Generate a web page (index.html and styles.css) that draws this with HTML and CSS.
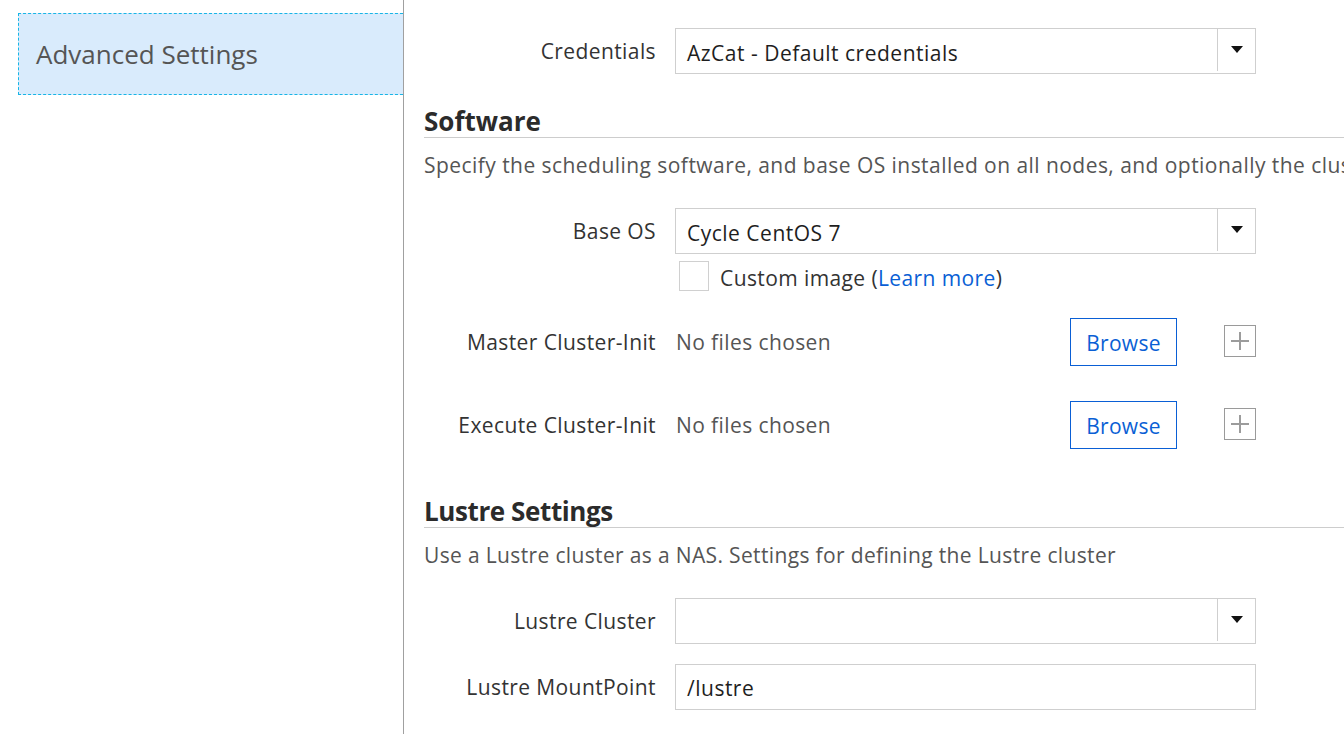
FILE: index.html
```html
<!DOCTYPE html>
<html>
<head>
<meta charset="utf-8">
<link rel="stylesheet" href="styles.css">
</head>
<body>
<div class="page">
  <aside class="sidebar">
    <div class="nav-item">Advanced Settings</div>
  </aside>
  <main class="main">
    <div class="row">
      <label class="lbl">Credentials</label>
      <div class="select"><span class="val">AzCat - Default credentials</span><span class="arrow"><i></i></span></div>
    </div>

    <h2 class="section">Software</h2>
    <p class="desc">Specify the scheduling software, and base OS installed on all nodes, and optionally the cluster-init specs to run at startup</p>

    <div class="row">
      <label class="lbl">Base OS</label>
      <div class="select"><span class="val">Cycle CentOS 7</span><span class="arrow"><i></i></span></div>
    </div>
    <div class="row check-row">
      <span></span>
      <div class="check"><span class="box"></span><span>Custom image (<a class="link">Learn more</a>)</span></div>
    </div>

    <div class="row file-row first">
      <label class="lbl">Master Cluster-Init</label>
      <div class="file">
        <span class="nofile">No files chosen</span>
        <button class="browse">Browse</button>
        <button class="plus"><i></i></button>
      </div>
    </div>
    <div class="row file-row">
      <label class="lbl">Execute Cluster-Init</label>
      <div class="file">
        <span class="nofile">No files chosen</span>
        <button class="browse">Browse</button>
        <button class="plus"><i></i></button>
      </div>
    </div>

    <h2 class="section lustre">Lustre Settings</h2>
    <p class="desc short">Use a Lustre cluster as a NAS. Settings for defining the Lustre cluster</p>

    <div class="row">
      <label class="lbl">Lustre Cluster</label>
      <div class="select"><span class="val"></span><span class="arrow"><i></i></span></div>
    </div>
    <div class="row mount">
      <label class="lbl">Lustre MountPoint</label>
      <div class="input">/lustre</div>
    </div>
  </main>
</div>
</body>
</html>
```

FILE: styles.css
```css
html, body {
  margin: 0;
  padding: 0;
  background: #fff;
  overflow: hidden;
}
body {
  font-family: "Open Sans", "Noto Sans", sans-serif;
  color: #333;
  width: 1344px;
  height: 734px;
}
.page {
  display: flex;
  height: 734px;
}
.sidebar {
  width: 404px;
  flex: none;
  border-right: 1px solid #a0a0a0;
  padding-top: 13px;
  box-sizing: border-box;
}
.nav-item {
  margin-left: 18px;
  height: 82px;
  box-sizing: border-box;
  background: #d9ebfc;
  border: 1px dashed #17b5e6;
  border-right: none;
  padding-left: 17px;
  display: flex;
  align-items: center;
  font-size: 26px;
  color: #555;
}
.main {
  flex: 1;
  padding-left: 20px;
  padding-top: 28px;
  overflow: hidden;
  white-space: nowrap;
}
.row {
  display: grid;
  grid-template-columns: 232px 581px;
  column-gap: 19px;
  align-items: center;
}
.lbl {
  text-align: right;
  font-size: 21px;
  line-height: 28px;
  color: #333;
  letter-spacing: 0.4px;
}
.select, .input {
  height: 46px;
  box-sizing: border-box;
  border: 1px solid #cfcfcf;
  display: flex;
  align-items: center;
  font-size: 21px;
  color: #1e1e1e;
  letter-spacing: 0.5px;
}
.select .val {
  flex: 1;
  padding-left: 11px;
  padding-top: 3px;
}
.input {
  padding-left: 11px;
  padding-top: 2px;
}
.arrow {
  width: 37px;
  height: 42px;
  border-left: 1px solid #cfcfcf;
  display: flex;
  align-items: center;
  justify-content: center;
  align-self: flex-start;
}
.arrow i {
  width: 0;
  height: 0;
  border-left: 6px solid transparent;
  border-right: 6px solid transparent;
  border-top: 7px solid #111;
  margin-top: -2px;
}
.section {
  margin: 32px 0 0 0;
  font-size: 26px;
  font-weight: 700;
  color: #2b2b2b;
  line-height: 30px;
  padding-bottom: 1px;
  border-bottom: 1px solid #cdcdcd;
}
.desc {
  margin: 13px 0 29px 0;
  font-size: 21px;
  color: #555;
  line-height: 28px;
  letter-spacing: 0.45px;
}
.desc.short {
  letter-spacing: 0.35px;
}
.check-row {
  margin-top: 6px;
}
.check {
  display: flex;
  align-items: center;
  font-size: 21px;
  line-height: 28px;
  color: #333;
  padding-left: 4px;
  letter-spacing: 0.4px;
}
.check .box {
  width: 30px;
  height: 30px;
  box-sizing: border-box;
  border: 1px solid #d0d0d0;
  margin-right: 11px;
}
.check .box + span {
  padding-top: 4px;
}
.link {
  color: #0a5fd5;
}
.file-row {
  height: 48px;
  margin-top: 35px;
}
.file-row.first {
  margin-top: 26px;
}
.file {
  display: flex;
  align-items: center;
}
.nofile {
  font-size: 21px;
  color: #555;
  padding-left: 1px;
  flex: 1;
  letter-spacing: 0.4px;
}
.browse {
  width: 107px;
  height: 48px;
  box-sizing: border-box;
  border: 1px solid #0a5fd5;
  background: #fff;
  color: #0a5fd5;
  font-family: inherit;
  font-size: 21px;
  letter-spacing: 0.3px;
  padding: 2px 0 0 0;
  margin-right: 47px;
}
.plus {
  width: 32px;
  height: 32px;
  box-sizing: border-box;
  border: 1px solid #9a9a9a;
  background: #fff;
  padding: 0;
  display: flex;
  align-items: center;
  justify-content: center;
  margin-bottom: 2px;
}
.plus i {
  width: 18px;
  height: 18px;
  position: relative;
}
.plus i::before, .plus i::after {
  content: "";
  position: absolute;
  background: #9c9c9c;
}
.plus i::before {
  left: 0;
  top: 8px;
  width: 18px;
  height: 2px;
}
.plus i::after {
  left: 8px;
  top: 0;
  width: 2px;
  height: 18px;
}
.section.lustre {
  margin-top: 47px;
  letter-spacing: -0.4px;
}
.mount {
  margin-top: 20px;
}
```
